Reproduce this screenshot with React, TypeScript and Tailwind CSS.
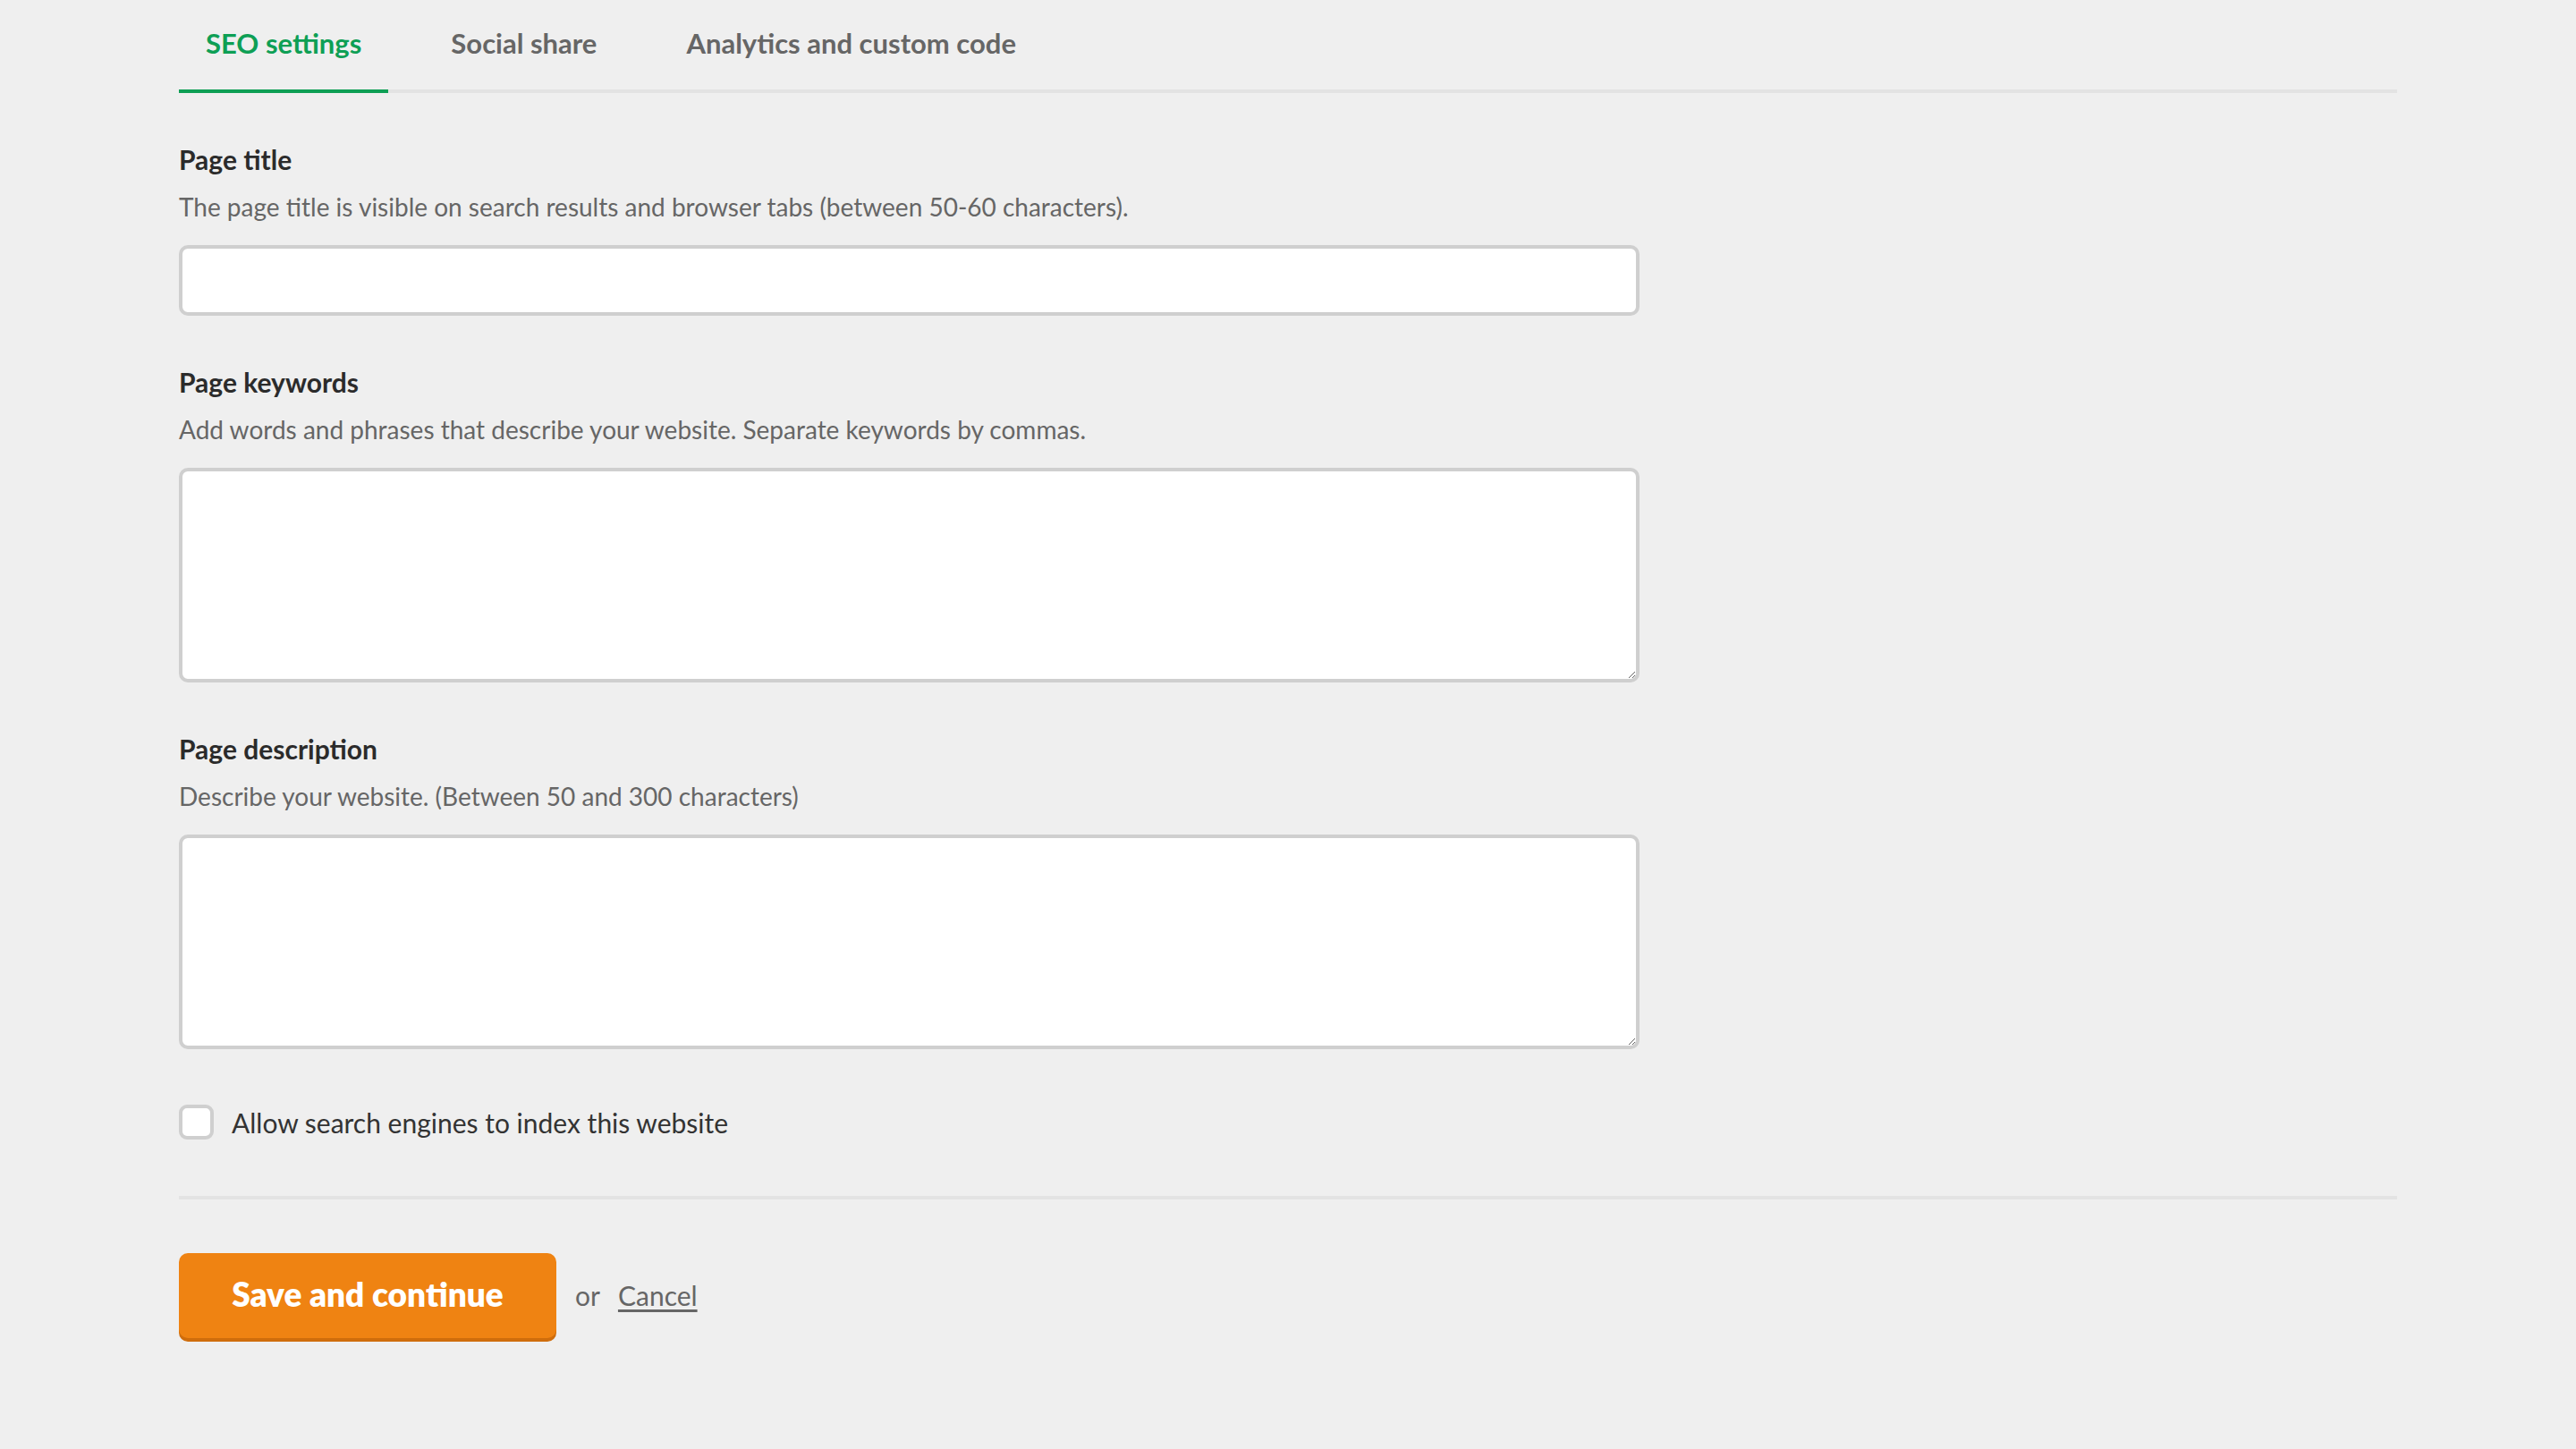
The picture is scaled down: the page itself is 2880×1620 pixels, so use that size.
import { useState } from 'react'

const tabs = ['SEO settings', 'Social share', 'Analytics and custom code']

function Field({
  label,
  hint,
  multiline,
}: {
  label: string
  hint: string
  multiline?: boolean
}) {
  return (
    <div className="mt-[56px]">
      <label className="block text-[30px] leading-[36px] font-bold text-[#2b2b2b]">
        {label}
      </label>
      <p className="mt-[18px] text-[28px] leading-[34px] text-[#666666]">{hint}</p>
      {multiline ? (
        <textarea className="mt-[26px] block w-[1633px] h-[240px] bg-white border-4 border-[#cfcfcf] rounded-[10px] outline-none" />
      ) : (
        <input
          type="text"
          className="mt-[26px] block w-[1633px] h-[79px] bg-white border-4 border-[#cfcfcf] rounded-[10px] outline-none"
        />
      )}
    </div>
  )
}

export default function App() {
  const [active, setActive] = useState(0)
  const [allow, setAllow] = useState(false)

  return (
    <div className="min-h-screen w-full bg-[#efefef] font-['Lato',sans-serif] px-[200px]">
      <div className="flex items-start gap-[40px] border-b-4 border-[#e3e3e3]">
        {tabs.map((t, i) => (
          <div
            key={t}
            onClick={() => setActive(i)}
            className={
              i === active
                ? '-mb-[4px] px-[30px] pt-[30px] pb-[34px] cursor-pointer leading-[36px] text-[31px] font-bold text-[#0e9f55] border-b-4 border-[#0e9f55]'
                : '-mb-[4px] px-[30px] pt-[30px] pb-[34px] cursor-pointer leading-[36px] text-[31px] font-bold text-[#666666] border-b-4 border-transparent'
            }
          >
            {t}
          </div>
        ))}
      </div>

      <Field
        label="Page title"
        hint="The page title is visible on search results and browser tabs (between 50-60 characters)."
      />
      <Field
        label="Page keywords"
        hint="Add words and phrases that describe your website. Separate keywords by commas."
        multiline
      />
      <Field
        label="Page description"
        hint="Describe your website. (Between 50 and 300 characters)"
        multiline
      />

      <label
        className="mt-[62px] flex items-center gap-[20px] cursor-pointer"
        onClick={() => setAllow(!allow)}
      >
        <span
          className={
            allow
              ? 'w-[39px] h-[39px] rounded-[9px] border-4 border-[#0e9f55] bg-[#0e9f55]'
              : 'w-[39px] h-[39px] rounded-[9px] border-4 border-[#cfcfcf] bg-white'
          }
        />
        <span className="text-[30px] leading-[36px] text-[#333333]">
          Allow search engines to index this website
        </span>
      </label>

      <div className="mt-[63px] h-[4px] bg-[#e3e3e3]" />

      <div className="mt-[60px] flex items-center pb-[120px]">
        <button className="h-[95px] w-[422px] pb-[4px] rounded-[10px] bg-[#ef8312] shadow-[0_4px_0_#cf6d0c] text-white text-[37px] font-extrabold">
          Save and continue
        </button>
        <span className="ml-[21px] text-[30px] text-[#666666]">or</span>
        <a href="#" className="ml-[20px] text-[30px] text-[#666666] underline underline-offset-4">
          Cancel
        </a>
      </div>
    </div>
  )
}
